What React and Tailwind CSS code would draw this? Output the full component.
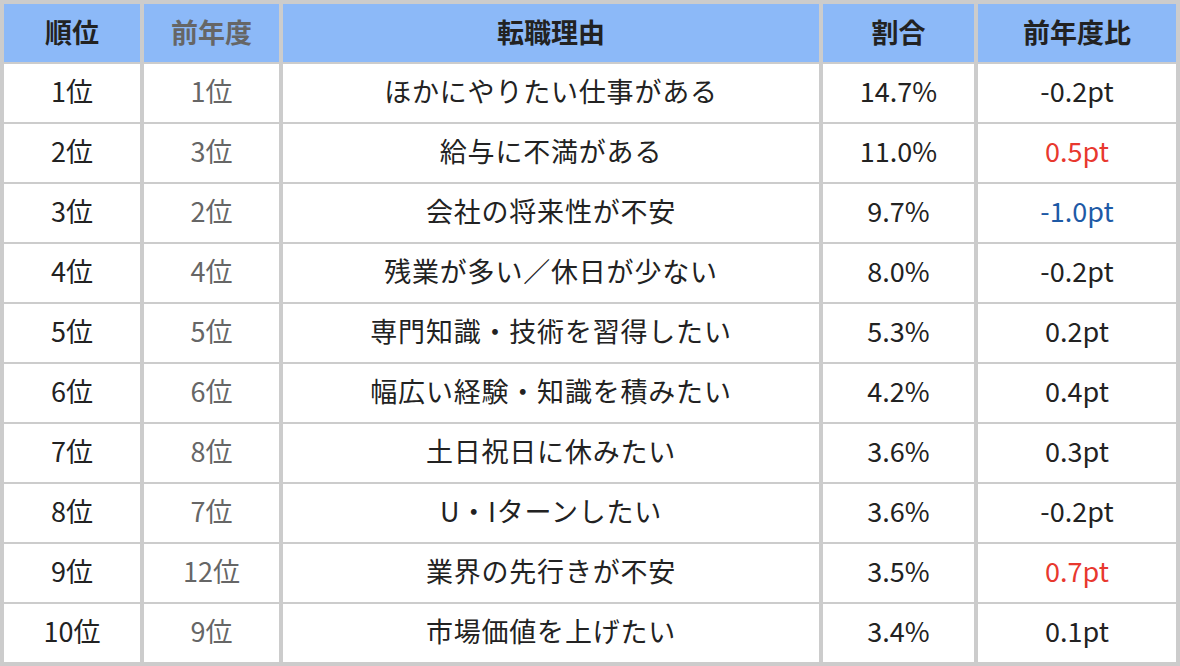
const rows = [
  { rank: "1位", prev: "1位", reason: "ほかにやりたい仕事がある", rate: "14.7%", diff: "-0.2pt" },
  { rank: "2位", prev: "3位", reason: "給与に不満がある", rate: "11.0%", diff: "0.5pt", tone: "up" },
  { rank: "3位", prev: "2位", reason: "会社の将来性が不安", rate: "9.7%", diff: "-1.0pt", tone: "down" },
  { rank: "4位", prev: "4位", reason: "残業が多い／休日が少ない", rate: "8.0%", diff: "-0.2pt" },
  { rank: "5位", prev: "5位", reason: "専門知識・技術を習得したい", rate: "5.3%", diff: "0.2pt" },
  { rank: "6位", prev: "6位", reason: "幅広い経験・知識を積みたい", rate: "4.2%", diff: "0.4pt" },
  { rank: "7位", prev: "8位", reason: "土日祝日に休みたい", rate: "3.6%", diff: "0.3pt" },
  { rank: "8位", prev: "7位", reason: "U・Iターンしたい", rate: "3.6%", diff: "-0.2pt" },
  { rank: "9位", prev: "12位", reason: "業界の先行きが不安", rate: "3.5%", diff: "0.7pt", tone: "up" },
  { rank: "10位", prev: "9位", reason: "市場価値を上げたい", rate: "3.4%", diff: "0.1pt" },
];

const Cell = ({ children, className = "" }) => (
  <div className={`bg-white h-[58px] pb-[6px] flex items-center justify-center ${className}`}>{children}</div>
);

const Head = ({ children, className = "text-[#222222]" }) => (
  <div className={`bg-[#8cb9f8] h-[58px] pb-[4px] flex items-center justify-center font-bold ${className}`}>{children}</div>
);

export default function App() {
  return (
    <div
      className="w-[1180px] h-[666px] bg-[#cccccc] p-[4px] grid grid-cols-[136px_135px_536px_151px_198px] gap-x-[4px] gap-y-[2px] text-[27px] leading-none text-[#222222]"
      style={{ fontFamily: '"Noto Sans CJK JP", "Noto Sans", sans-serif' }}
    >
      <Head>順位</Head>
      <Head className="text-[#666666]">前年度</Head>
      <Head>転職理由</Head>
      <Head>割合</Head>
      <Head>前年度比</Head>
      {rows.map((r) => (
        <div key={r.rank} className="contents">
          <Cell>{r.rank}</Cell>
          <Cell className="text-[#666666]">{r.prev}</Cell>
          <Cell className="tracking-[0.8px]">{r.reason}</Cell>
          <Cell>{r.rate}</Cell>
          <Cell className={r.tone === "up" ? "text-[#e8382e]" : r.tone === "down" ? "text-[#1e5aa6]" : ""}>{r.diff}</Cell>
        </div>
      ))}
    </div>
  );
}
